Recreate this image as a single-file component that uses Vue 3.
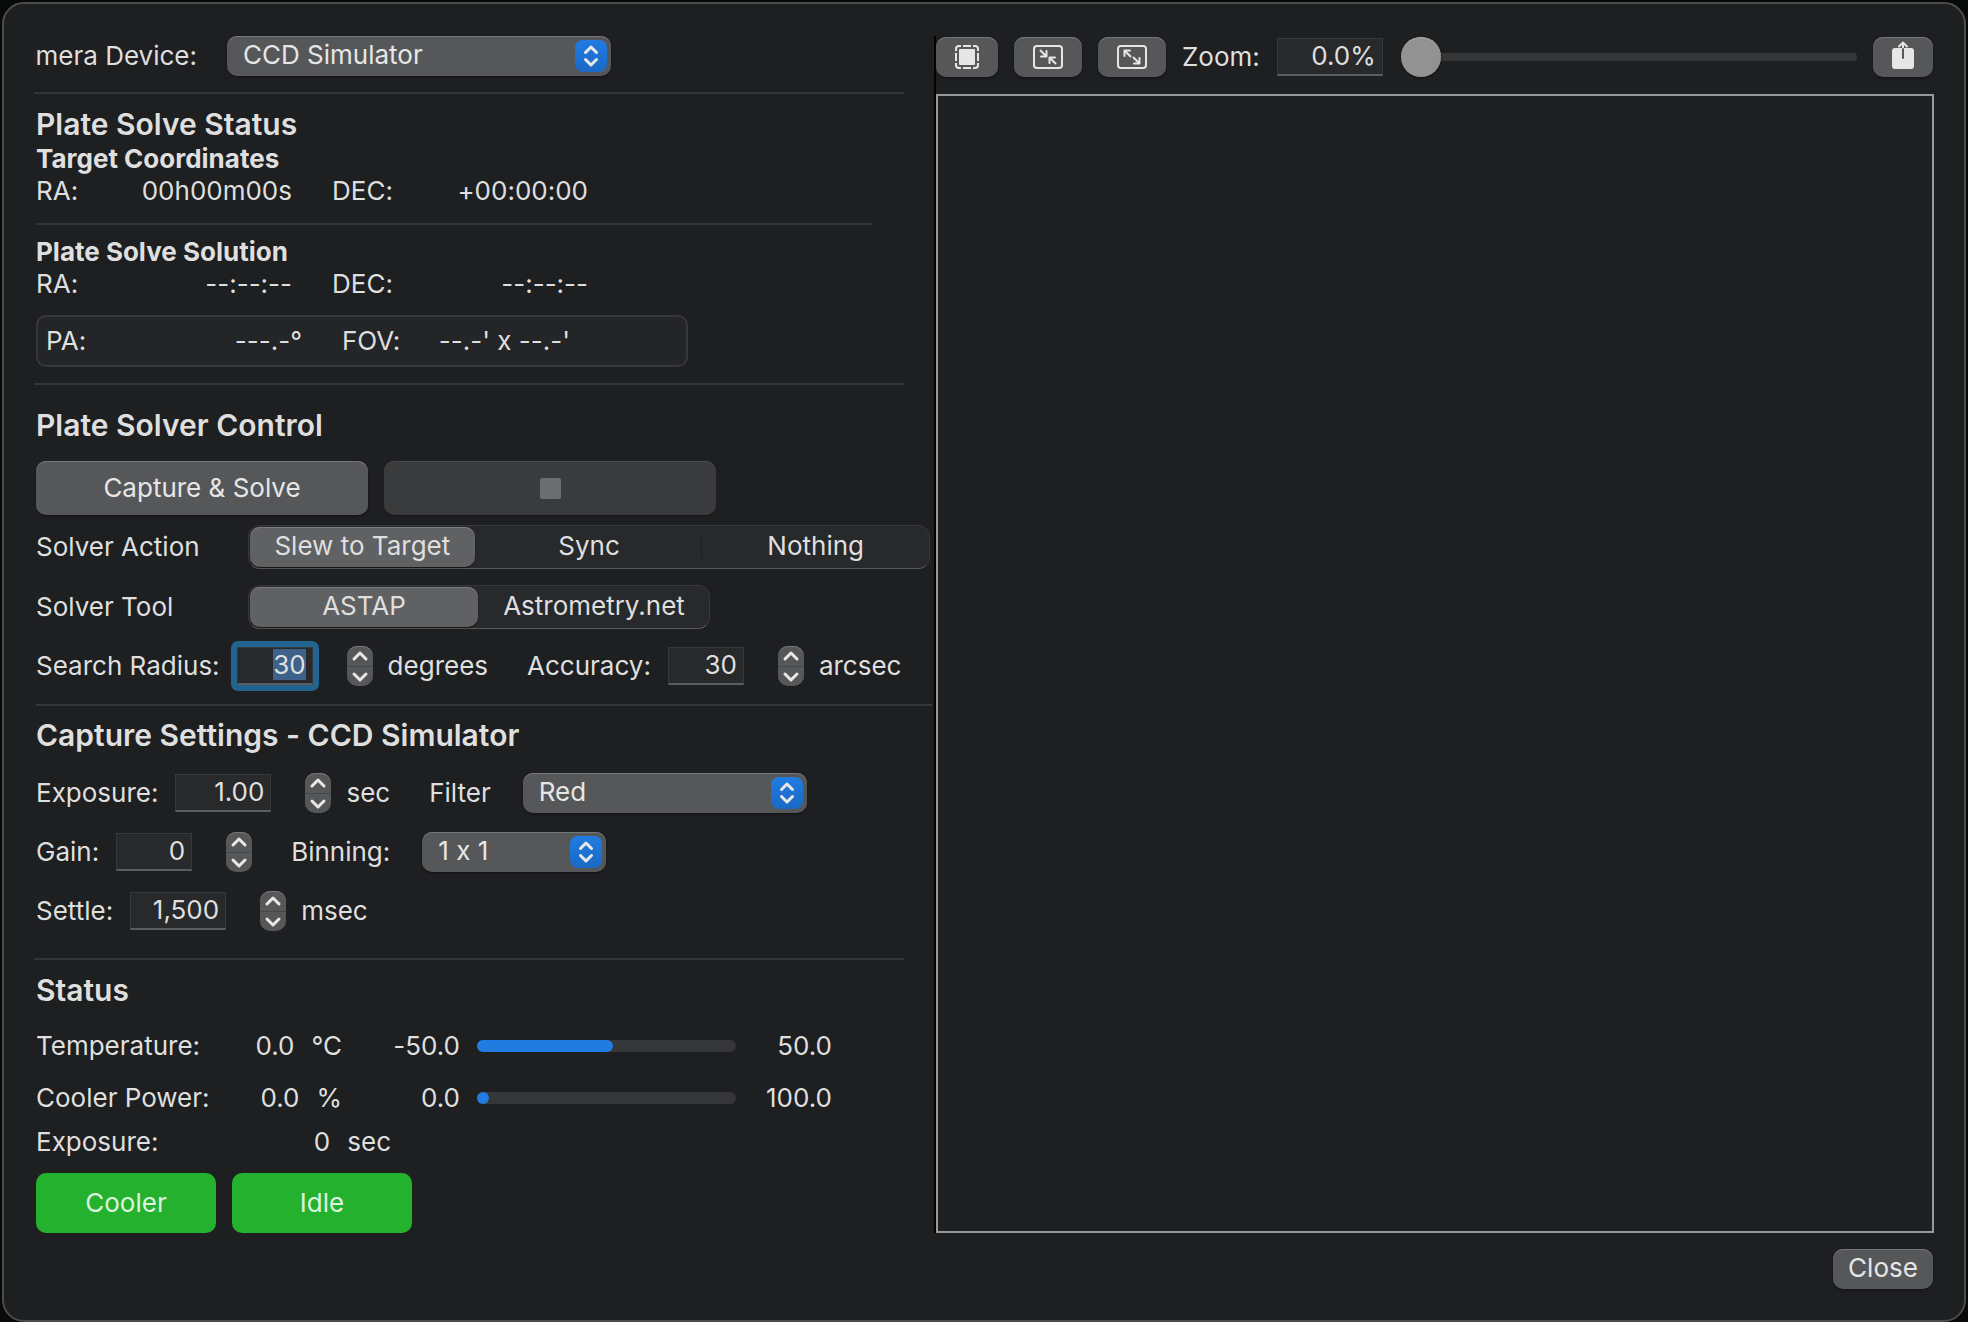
<template>
  <main class="window">
    <div class="panes">
      <section class="controls">
        <div class="row device-row">
          <label class="device-label" for="device">Camera Device:</label>
          <span class="popup popup--device">
            <select id="device" v-model="device">
              <option>CCD Simulator</option>
            </select>
            <svg class="popup-arrows" viewBox="0 0 32 32" aria-hidden="true">
              <path d="M10.5 12.5 16 7l5.5 5.5M10.5 19.5 16 25l5.5-5.5" />
            </svg>
          </span>
        </div>

        <hr />

        <section class="solve-status">
          <h2>Plate Solve Status</h2>
          <h3>Target Coordinates</h3>
          <dl class="coords">
            <dt>RA:</dt>
            <dd>00h00m00s</dd>
            <dt>DEC:</dt>
            <dd>+00:00:00</dd>
          </dl>
          <hr class="inner-rule" />
          <h3>Plate Solve Solution</h3>
          <dl class="coords">
            <dt>RA:</dt>
            <dd>--:--:--</dd>
            <dt>DEC:</dt>
            <dd>--:--:--</dd>
          </dl>
          <dl class="coords field-box">
            <dt>PA:</dt>
            <dd>---.-°</dd>
            <dt>FOV:</dt>
            <dd>--.-' x --.-'</dd>
          </dl>
        </section>

        <hr />

        <section class="solver">
          <h2>Plate Solver Control</h2>
          <div class="actions">
            <button type="button" class="btn btn--large">Capture &amp; Solve</button>
            <button type="button" class="btn btn--large" disabled aria-label="Stop">
              <span class="stop-mark"></span>
            </button>
          </div>

          <div
            v-for="group in segments"
            :key="group.name"
            class="segment-row"
            role="radiogroup"
            :aria-labelledby="group.name"
          >
            <span :id="group.name" class="segment-title">{{ group.title }}</span>
            <div class="segmented" :class="`segmented--${group.name}`">
              <label v-for="option in group.options" :key="option" class="segment">
                <input
                  v-model="group.value"
                  type="radio"
                  :name="group.name"
                  :value="option"
                />
                <span>{{ option }}</span>
              </label>
            </div>
          </div>

          <div class="row">
            <label for="radius">Search Radius:</label>
            <input id="radius" ref="radiusInput" v-model="radius" class="field" type="text" />
            <span class="stepper">
              <button type="button" aria-label="Increase search radius">
                <svg viewBox="0 0 26 20"><path d="M7 13l6-6 6 6" /></svg>
              </button>
              <button type="button" aria-label="Decrease search radius">
                <svg viewBox="0 0 26 20"><path d="M7 7l6 6 6-6" /></svg>
              </button>
            </span>
            <span class="unit">degrees</span>
            <label class="next" for="accuracy">Accuracy:</label>
            <input id="accuracy" v-model="accuracy" class="field" type="text" />
            <span class="stepper">
              <button type="button" aria-label="Increase accuracy">
                <svg viewBox="0 0 26 20"><path d="M7 13l6-6 6 6" /></svg>
              </button>
              <button type="button" aria-label="Decrease accuracy">
                <svg viewBox="0 0 26 20"><path d="M7 7l6 6 6-6" /></svg>
              </button>
            </span>
            <span class="unit">arcsec</span>
          </div>
        </section>

        <hr class="wide-rule" />

        <section class="capture">
          <h2>Capture Settings - {{ device }}</h2>
          <div class="row">
            <label for="exposure">Exposure:</label>
            <input id="exposure" v-model="exposure" class="field field--wide" type="text" />
            <span class="stepper">
              <button type="button" aria-label="Increase exposure">
                <svg viewBox="0 0 26 20"><path d="M7 13l6-6 6 6" /></svg>
              </button>
              <button type="button" aria-label="Decrease exposure">
                <svg viewBox="0 0 26 20"><path d="M7 7l6 6 6-6" /></svg>
              </button>
            </span>
            <span class="unit">sec</span>
            <label class="next popup-label" for="filter">Filter</label>
            <span class="popup popup--filter">
              <select id="filter" v-model="filter">
                <option>Red</option>
              </select>
              <svg class="popup-arrows" viewBox="0 0 32 32" aria-hidden="true">
                <path d="M10.5 12.5 16 7l5.5 5.5M10.5 19.5 16 25l5.5-5.5" />
              </svg>
            </span>
          </div>
          <div class="row">
            <label for="gain">Gain:</label>
            <input id="gain" v-model="gain" class="field" type="text" />
            <span class="stepper">
              <button type="button" aria-label="Increase gain">
                <svg viewBox="0 0 26 20"><path d="M7 13l6-6 6 6" /></svg>
              </button>
              <button type="button" aria-label="Decrease gain">
                <svg viewBox="0 0 26 20"><path d="M7 7l6 6 6-6" /></svg>
              </button>
            </span>
            <label class="next popup-label" for="binning">Binning:</label>
            <span class="popup popup--binning">
              <select id="binning" v-model="binning">
                <option>1 x 1</option>
              </select>
              <svg class="popup-arrows" viewBox="0 0 32 32" aria-hidden="true">
                <path d="M10.5 12.5 16 7l5.5 5.5M10.5 19.5 16 25l5.5-5.5" />
              </svg>
            </span>
          </div>
          <div class="row">
            <label for="settle">Settle:</label>
            <input id="settle" v-model="settle" class="field field--wide" type="text" />
            <span class="stepper">
              <button type="button" aria-label="Increase settle time">
                <svg viewBox="0 0 26 20"><path d="M7 13l6-6 6 6" /></svg>
              </button>
              <button type="button" aria-label="Decrease settle time">
                <svg viewBox="0 0 26 20"><path d="M7 7l6 6 6-6" /></svg>
              </button>
            </span>
            <span class="unit">msec</span>
          </div>
        </section>

        <hr />

        <section class="status">
          <h2>Status</h2>
          <div v-for="gauge in gauges" :key="gauge.label" class="gauge">
            <span>{{ gauge.label }}</span>
            <span class="reading">
              <span>{{ gauge.value.toFixed(1) }}</span>
              <span>{{ gauge.unit }}</span>
            </span>
            <span class="limit">{{ gauge.min.toFixed(1) }}</span>
            <div
              class="bar"
              role="progressbar"
              :aria-label="gauge.label"
              :aria-valuemin="gauge.min"
              :aria-valuemax="gauge.max"
              :aria-valuenow="gauge.value"
            >
              <div class="bar-fill" :style="{ width: fillWidth(gauge) }"></div>
            </div>
            <span class="limit">{{ gauge.max.toFixed(1) }}</span>
          </div>
          <div class="exposure-left">
            <span>Exposure:</span>
            <span class="reading">
              <span>0</span>
              <span>sec</span>
            </span>
          </div>
          <div class="badges">
            <button type="button" class="badge">Cooler</button>
            <button type="button" class="badge">Idle</button>
          </div>
        </section>
      </section>

      <section class="viewer">
        <div class="toolbar">
          <button type="button" class="btn tool tool--fit" aria-label="Fit to window">
            <svg width="26" height="26" viewBox="0 0 26 26">
              <rect x="5" y="5" width="16" height="16" rx="1" fill="currentColor" />
              <path
                class="line"
                d="M2 7V5a3 3 0 0 1 3-3h2M9 2h8M19 2h2a3 3 0 0 1 3 3v2M24 9v8M24 19v2a3 3 0 0 1-3 3h-2M17 24H9M7 24H5a3 3 0 0 1-3-3v-2M2 17V9"
              />
            </svg>
          </button>
          <button type="button" class="btn tool" aria-label="Zoom out">
            <svg width="32" height="26" viewBox="0 0 32 26">
              <rect class="line" x="2" y="2" width="28" height="22" rx="3" />
              <path class="line" d="M8.500 6.500l6 6M14.500 7v5.500H9M23.500 19.500l-6-6M17.500 19v-5.500H23" />
            </svg>
          </button>
          <button type="button" class="btn tool" aria-label="Zoom in">
            <svg width="32" height="26" viewBox="0 0 32 26">
              <rect class="line" x="2" y="2" width="28" height="22" rx="3" />
              <path class="line" d="M8.500 6.500l6 6M8.500 12V6.500H14M23.500 19.500l-6-6M18 19.500h5.500V14" />
            </svg>
          </button>
          <label for="zoom">Zoom:</label>
          <input id="zoom" class="field field--zoom" type="text" :value="zoomText" />
          <input v-model.number="zoom" class="slider" type="range" min="0" max="100" aria-label="Zoom" />
          <button type="button" class="btn tool tool--share" aria-label="Share">
            <svg width="24" height="32" viewBox="0 0 24 32">
              <rect x="1" y="7" width="22" height="21" rx="3" fill="currentColor" />
              <path class="cut" d="M12 7v10" />
              <path class="line" d="M12 6.500V1.500M8 5.500l4-4 4 4" />
            </svg>
          </button>
        </div>
        <div class="canvas"></div>
      </section>
    </div>

    <footer class="footer">
      <button type="button" class="btn btn--close">Close</button>
    </footer>
  </main>
</template>

<script setup>
import { computed, onMounted, reactive, ref } from 'vue';

const device = ref('CCD Simulator');
const radius = ref('30');
const accuracy = ref('30');
const exposure = ref('1.00');
const filter = ref('Red');
const gain = ref('0');
const binning = ref('1 x 1');
const settle = ref('1,500');
const zoom = ref(0);
const radiusInput = ref(null);

const zoomText = computed(() => `${zoom.value.toFixed(1)}%`);

const segments = reactive([
  {
    name: 'action',
    title: 'Solver Action',
    options: ['Slew to Target', 'Sync', 'Nothing'],
    value: 'Slew to Target',
  },
  {
    name: 'tool',
    title: 'Solver Tool',
    options: ['ASTAP', 'Astrometry.net'],
    value: 'ASTAP',
  },
]);

const gauges = [
  { label: 'Temperature:', value: 0, unit: '°C', min: -50, max: 50 },
  { label: 'Cooler Power:', value: 0, unit: '%', min: 0, max: 100 },
];

// The fill never gets narrower than its own round cap
const fillWidth = ({ value, min, max }) =>
  `calc(12px + (100% - 12px) * ${(value - min) / (max - min)})`;

// The search radius is ready to be typed over
onMounted(() => {
  radiusInput.value.focus();
  radiusInput.value.select();
});
</script>

<style>
body {
  background: #080909;
}
</style>

<style scoped>
.window,
.window * {
  box-sizing: border-box;
}

.window {
  min-height: calc(100vh - 2px);
  margin: 2px 2px 0;
  padding: 32px 30px 28px;
  border: 2px solid #4b4c4e;
  border-radius: 22px;
  background: #1e1f21;
  color: #dfdfdf;
  font-family: Inter, "Liberation Sans", sans-serif;
  font-size: 26px;
  font-feature-settings: "calt" 0;
  line-height: 32px;
  white-space: nowrap;
}

button,
input,
select {
  margin: 0;
  padding: 0;
  border: 0;
  color: inherit;
  font: inherit;
  font-feature-settings: inherit;
}

h2,
h3,
dl,
dd {
  margin: 0;
}

h2 {
  font-size: 30px;
  font-weight: 600;
  line-height: 36px;
}

h3 {
  font-size: 26px;
  font-weight: 700;
  line-height: 32px;
}

hr {
  height: 2px;
  margin: 0 30px 0 0;
  border: 0;
  background: #343537;
}

.panes {
  display: grid;
  grid-template-columns: minmax(0, 9fr) minmax(0, 10fr);
}

.row {
  display: flex;
  align-items: center;
  height: 40px;
}

/* Left pane */
.controls > section {
  padding-left: 2px;
}

.device-row {
  margin-bottom: 16px;
}

.device-label {
  display: flex;
  justify-content: flex-end;
  width: 163px;
  margin-right: 30px;
  overflow: hidden;
}

.solve-status {
  padding: 12px 0 16px;
}

.solve-status h2 {
  margin-bottom: 1px;
}

.inner-rule {
  margin: 16px 62px 11px 0;
}

.coords {
  display: grid;
  grid-template-columns: 84px 172px 40px 84px 172px;
}

.coords dd {
  text-align: right;
}

.coords dt:nth-of-type(2) {
  grid-column: 4;
}

.field-box {
  grid-template-columns: 84px 172px 40px 84px 144px;
  width: 652px;
  margin-top: 15px;
  padding: 8px;
  border: 2px solid #37383a;
  border-radius: 10px;
  background: #242527;
}

.solver {
  padding: 22px 0 18px;
}

.solver .row {
  margin-top: 17px;
}

.actions {
  display: flex;
  gap: 16px;
  margin: 18px 0 10px;
}

.segment-row {
  display: flex;
  align-items: center;
}

.segment-row + .segment-row {
  margin-top: 16px;
}

.segment-title {
  width: 212px;
}

.segmented {
  display: flex;
  gap: 2px;
  height: 44px;
  padding: 1px;
  border: 1px solid #37383a;
  border-bottom-color: #58595b;
  border-radius: 12px;
  background: #28292b;
}

.segment {
  display: flex;
  flex: 1;
}

.segmented--action {
  width: 682px;
}

.segmented--tool {
  width: 462px;
}

.segment + .segment {
  position: relative;
}

.segmented--action .segment:last-child::before {
  position: absolute;
  top: 9px;
  left: -2px;
  width: 1px;
  height: 22px;
  background: #1f2022;
  content: "";
}

.segment input {
  width: 0;
  appearance: none;
}

.segment span {
  flex: 1;
  padding: 3px 0 5px;
  border-radius: 10px;
  text-align: center;
}

.segment input:checked + span {
  background: #606163;
  box-shadow: inset 0 1px #7c7d7f, 0 1px 1px #141516;
}

.wide-rule {
  margin: 0 2px;
}

.field {
  width: 76px;
  height: 38px;
  margin-left: 17px;
  padding: 0 6px 2px 0;
  border: 1px solid #37383a;
  border-bottom: 2px solid #5c5d5f;
  background: #28292b;
  text-align: right;
}

.field--wide {
  width: 96px;
}

.field:focus {
  border-radius: 1px;
  outline: 6px solid #22638f;
}

.field::selection {
  background: rgba(63, 99, 139, 0.99);
}

.stepper {
  display: flex;
  flex-direction: column;
  width: 26px;
  height: 40px;
  margin-left: 34px;
  overflow: hidden;
  border-radius: 10px;
  background: #565759;
  box-shadow: inset 0 1px #77787a;
}

.stepper button {
  display: flex;
  height: 20px;
  background: none;
}

.stepper button + button {
  border-top: 1px solid #464749;
}

.stepper svg {
  width: 26px;
  height: 20px;
}

.stepper path,
.popup-arrows path {
  fill: none;
  stroke: #e8e8e8;
  stroke-linecap: round;
  stroke-linejoin: round;
  stroke-width: 3;
}

.unit {
  margin-left: 15px;
}

.next {
  margin-left: 39px;
}

.popup-label {
  margin-right: 32px;
}

.popup {
  display: grid;
  align-items: center;
}

.popup > * {
  grid-area: 1 / 1;
}

.popup select {
  height: 40px;
  padding: 0 40px 2px 16px;
  border-radius: 10px;
  appearance: none;
  background: #565759;
  box-shadow: inset 0 1px #77787a, 0 1px 2px #111213;
  color: #e6e6e6;
}

.popup--device {
  width: 384px;
}

.popup--filter {
  width: 284px;
}

.popup--binning {
  width: 184px;
}

.popup-arrows {
  justify-self: end;
  width: 32px;
  height: 32px;
  margin-right: 4px;
  border-radius: 8px;
  background: linear-gradient(#207ce2, #1b68c4);
  pointer-events: none;
}

.capture {
  padding: 11px 0 27px;
}

.capture h2 {
  margin-bottom: 20px;
}

.capture .row + .row {
  margin-top: 19px;
}

.status {
  padding-top: 12px;
}

.status h2 {
  margin-bottom: 22px;
}

.gauge {
  display: grid;
  grid-template-columns: 176px 130px 118px 276px 96px;
  align-items: center;
  margin-bottom: 20px;
}

.gauge .limit {
  text-align: right;
}

.reading {
  display: flex;
  gap: 17px;
  justify-content: flex-end;
}

.bar {
  height: 12px;
  margin-left: 17px;
  border-radius: 6px;
  background: #353638;
}

.bar-fill {
  height: 12px;
  border-radius: 6px;
  background: #207ce0;
}

.exposure-left {
  display: grid;
  grid-template-columns: 176px 179px;
  margin: -8px 0 15px;
}

.badges {
  display: flex;
  gap: 16px;
}

.badge {
  width: 180px;
  height: 60px;
  border-radius: 10px;
  background: #24b22e;
  color: #def4df;
}

/* Buttons */
.btn {
  display: flex;
  align-items: center;
  justify-content: center;
  height: 40px;
  border-radius: 10px;
  background: #565759;
  box-shadow: inset 0 1px #77787a, 0 1px 2px #111213;
  color: #e6e6e6;
}

.btn--large {
  width: 332px;
  height: 54px;
}

.btn:disabled {
  background: #3a3b3c;
  box-shadow: inset 0 1px #48494b, 0 1px 1px #151617;
}

.btn--close {
  width: 100px;
  padding-bottom: 2px;
}

.stop-mark {
  width: 21px;
  height: 21px;
  border-radius: 2px;
  background: #6d6e70;
}

/* Right pane */
.viewer {
  display: flex;
  flex-direction: column;
  border-left: 2px solid #000;
}

.toolbar {
  display: flex;
  align-items: center;
  margin: 1px 1px 17px 0;
}

.tool {
  width: 68px;
  margin-right: 16px;
}

.tool--fit {
  width: 62px;
}

.tool--share {
  width: 60px;
  margin: 0;
}

.tool .line,
.tool .cut {
  fill: none;
  stroke: #e6e6e6;
  stroke-linecap: round;
  stroke-linejoin: round;
  stroke-width: 2;
}

.tool--fit .line {
  stroke-linecap: butt;
}

.tool .cut {
  stroke: #565759;
}

.field--zoom {
  width: 106px;
}

.slider {
  flex: 1;
  min-width: 0;
  height: 40px;
  margin: 0 16px 0 18px;
  appearance: none;
  background: none;
}

.slider::-webkit-slider-runnable-track {
  height: 8px;
  border-radius: 4px;
  background: #353638;
}

.slider::-webkit-slider-thumb {
  width: 40px;
  height: 40px;
  margin-top: -16px;
  border-radius: 50%;
  appearance: none;
  background: #929292;
  box-shadow: inset 0 1px #a8a8a8, 0 1px 2px #111213;
}

.canvas {
  flex: 1;
  border: 2px solid #98999b;
}

.footer {
  display: flex;
  justify-content: flex-end;
  margin-top: 16px;
  padding-right: 1px;
}
</style>
